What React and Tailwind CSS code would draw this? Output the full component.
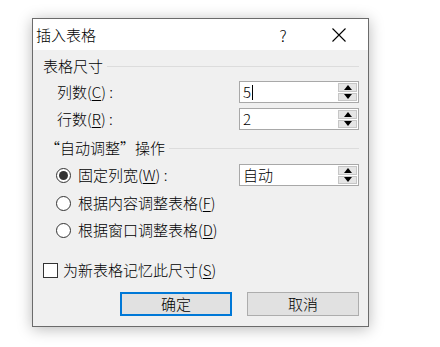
import React from "react";

const font = { fontFamily: '"Noto Sans CJK SC", "Noto Sans", sans-serif' };

function Spin() {
  return (
    <div className="w-[21px] flex flex-col p-[1px] gap-[1px] bg-white">
      <div className="flex-1 bg-[#e5e5e5] border border-[#c6c6c6] flex items-center justify-center">
        <svg width="8" height="5" viewBox="0 0 8 5"><path d="M0 5 L4 0 L8 5 Z" fill="#000" /></svg>
      </div>
      <div className="flex-1 bg-[#e5e5e5] border border-[#c6c6c6] flex items-center justify-center">
        <svg width="8" height="5" viewBox="0 0 8 5"><path d="M0 0 L8 0 L4 5 Z" fill="#000" /></svg>
      </div>
    </div>
  );
}

function Input({ children }) {
  return (
    <div className="w-[120px] h-[22px] border border-[#a8a8a8] bg-white flex">
      <div className="flex-1 flex items-center pl-[3px] text-[15px] leading-[20px] text-black">{children}</div>
      <Spin />
    </div>
  );
}

function Acc({ k }) {
  return (
    <span>
      (<span className="underline underline-offset-2 decoration-1">{k}</span>)
    </span>
  );
}

function Radio({ checked }) {
  return (
    <div className="w-[15px] h-[15px] rounded-full border border-[#333333] bg-white flex items-center justify-center">
      {checked && <div className="w-[9px] h-[9px] rounded-full bg-[#333333]" />}
    </div>
  );
}

export default function App() {
  return (
    <div lang="zh-CN" className="w-[440px] h-[347px] bg-white pl-[32px] pt-[18px] font-light" style={font}>
      <div className="w-[337px] h-[309px] border border-[#6b6b6b] flex flex-col shadow-[0_2px_14px_rgba(0,0,0,0.28)]">
        <div className="h-[31px] bg-white flex items-center pl-[3px] pr-[14px]">
          <span className="text-[15px] leading-[20px] text-black">插入表格</span>
          <div className="flex-1" />
          <div className="w-[30px] flex justify-center text-[16px] leading-[20px] text-black">?</div>
          <div className="w-[26px]" />
          <div className="w-[30px] flex justify-center">
            <svg width="14" height="14" viewBox="0 0 14 14">
              <path d="M0.5 0.5 L13.5 13.5 M13.5 0.5 L0.5 13.5" stroke="#000" strokeWidth="1.1" />
            </svg>
          </div>
        </div>
        <div className="flex-1 bg-[#f0f0f0] flex flex-col pl-[10px] pr-[9px] pt-[6px] text-[15px] leading-[20px] text-black">
          <div className="h-[20px] flex items-center">
            <span>表格尺寸</span>
            <div className="flex-1 h-px bg-[#dcdcdc] ml-[4px]" />
          </div>
          <div className="mt-[5px] h-[22px] flex items-center">
            <span className="pl-[14px]">列数<Acc k="C" /> :</span>
            <div className="flex-1" />
            <Input>5<span className="inline-block w-px h-[15px] bg-black ml-[1px]" /></Input>
          </div>
          <div className="mt-[5px] h-[22px] flex items-center">
            <span className="pl-[14px]">行数<Acc k="R" /> :</span>
            <div className="flex-1" />
            <Input>2</Input>
          </div>
          <div className="mt-[8px] h-[20px] flex items-center">
            <span className="pl-[2px]">“自动调整”操作</span>
            <div className="flex-1 h-px bg-[#dcdcdc] ml-[4px]" />
          </div>
          <div className="mt-[6px] h-[22px] flex items-center">
            <div className="pl-[13px] flex items-center gap-[7px]">
              <Radio checked />
              <span>固定列宽<Acc k="W" /> :</span>
            </div>
            <div className="flex-1" />
            <Input>自动</Input>
          </div>
          <div className="mt-[7px] h-[20px] flex items-center pl-[13px] gap-[7px]">
            <Radio />
            <span>根据内容调整表格<Acc k="F" /></span>
          </div>
          <div className="mt-[7px] h-[20px] flex items-center pl-[13px] gap-[7px]">
            <Radio />
            <span>根据窗口调整表格<Acc k="D" /></span>
          </div>
          <div className="mt-[20px] h-[20px] flex items-center gap-[5px]">
            <div className="w-[15px] h-[15px] border border-[#333333] bg-white" />
            <span>为新表格记忆此尺寸<Acc k="S" /></span>
          </div>
          <div className="mt-[12px] flex justify-end gap-[15px]">
            <div className="w-[112px] h-[24px] border-2 border-[#0078d7] bg-[#e1e1e1] flex items-center justify-center">确定</div>
            <div className="w-[112px] h-[24px] border border-[#adadad] bg-[#e1e1e1] flex items-center justify-center">取消</div>
          </div>
        </div>
      </div>
    </div>
  );
}
